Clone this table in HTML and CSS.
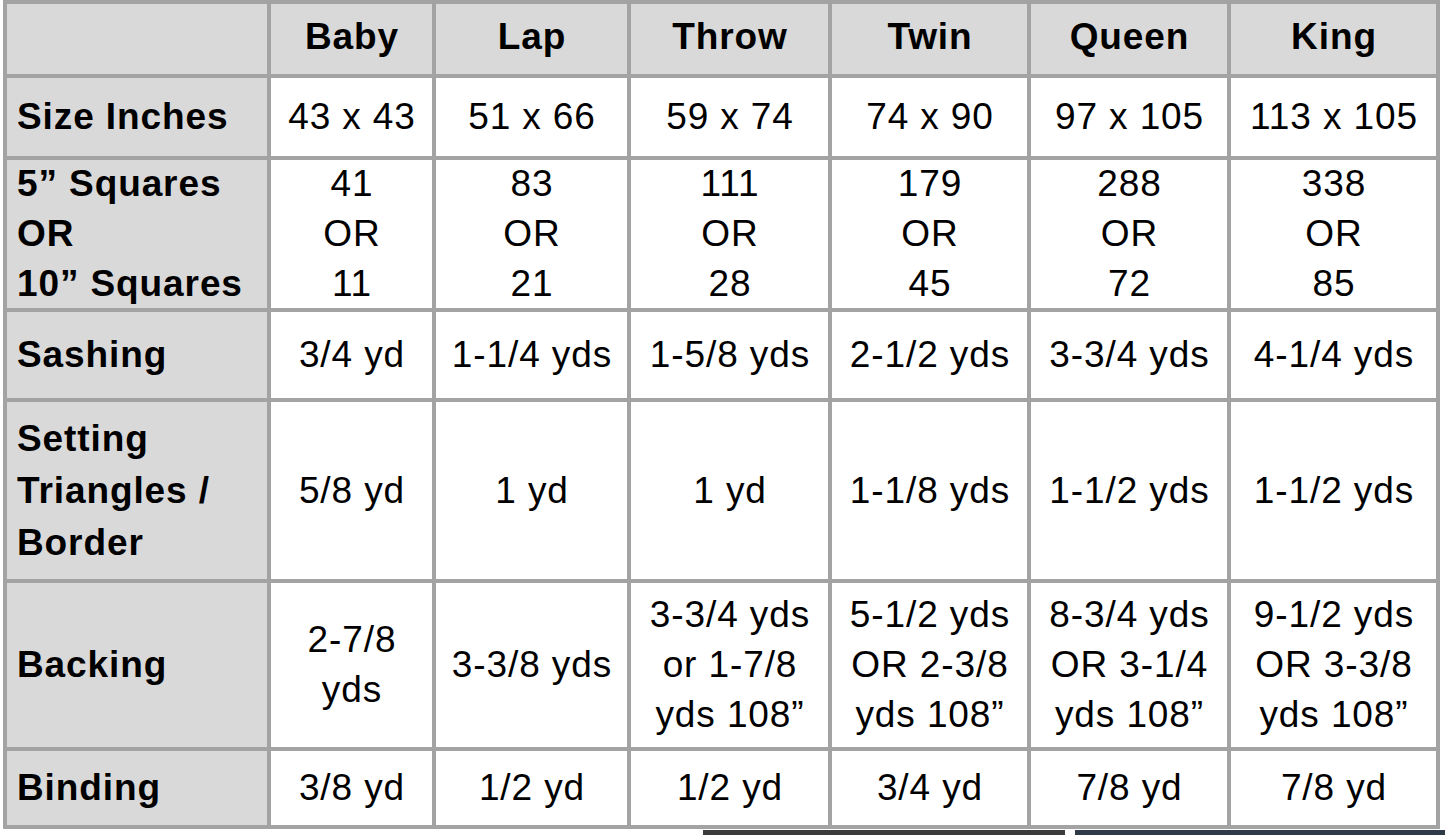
FILE: index.html
```html
<!DOCTYPE html>
<html lang="en">
<head>
<meta charset="utf-8">
<title>Quilt Size Chart</title>
<link rel="stylesheet" href="styles.css">
</head>
<body>
<div class="chart" role="table">
  <div class="cell head corner"></div>
  <div class="cell head">Baby</div>
  <div class="cell head">Lap</div>
  <div class="cell head">Throw</div>
  <div class="cell head">Twin</div>
  <div class="cell head">Queen</div>
  <div class="cell head">King</div>

  <div class="cell label">Size Inches</div>
  <div class="cell">43 x 43</div>
  <div class="cell">51 x 66</div>
  <div class="cell">59 x 74</div>
  <div class="cell">74 x 90</div>
  <div class="cell">97 x 105</div>
  <div class="cell">113 x 105</div>

  <div class="cell label">5” Squares<br>OR<br>10” Squares</div>
  <div class="cell">41<br>OR<br>11</div>
  <div class="cell">83<br>OR<br>21</div>
  <div class="cell">111<br>OR<br>28</div>
  <div class="cell">179<br>OR<br>45</div>
  <div class="cell">288<br>OR<br>72</div>
  <div class="cell">338<br>OR<br>85</div>

  <div class="cell label">Sashing</div>
  <div class="cell">3/4 yd</div>
  <div class="cell">1-1/4 yds</div>
  <div class="cell">1-5/8 yds</div>
  <div class="cell">2-1/2 yds</div>
  <div class="cell">3-3/4 yds</div>
  <div class="cell">4-1/4 yds</div>

  <div class="cell label tall">Setting<br>Triangles /<br>Border</div>
  <div class="cell">5/8 yd</div>
  <div class="cell">1 yd</div>
  <div class="cell">1 yd</div>
  <div class="cell">1-1/8 yds</div>
  <div class="cell">1-1/2 yds</div>
  <div class="cell">1-1/2 yds</div>

  <div class="cell label">Backing</div>
  <div class="cell">2-7/8<br>yds</div>
  <div class="cell">3-3/8 yds</div>
  <div class="cell">3-3/4 yds<br>or 1-7/8<br>yds 108”</div>
  <div class="cell">5-1/2 yds<br>OR 2-3/8<br>yds 108”</div>
  <div class="cell">8-3/4 yds<br>OR 3-1/4<br>yds 108”</div>
  <div class="cell">9-1/2 yds<br>OR 3-3/8<br>yds 108”</div>

  <div class="cell label">Binding</div>
  <div class="cell">3/8 yd</div>
  <div class="cell">1/2 yd</div>
  <div class="cell">1/2 yd</div>
  <div class="cell">3/4 yd</div>
  <div class="cell">7/8 yd</div>
  <div class="cell">7/8 yd</div>
</div>
<div class="below">
  <div class="bar bar-dark"></div>
  <div class="bar bar-navy"></div>
</div>
</body>
</html>
```

FILE: styles.css
```css
html, body {
  margin: 0;
  padding: 0;
  background: #ffffff;
}

body {
  padding-left: 3px;
  font-family: "Liberation Sans", Arial, sans-serif;
  color: #000000;
  overflow: hidden;
}

.chart {
  display: grid;
  width: 1437px;
  box-sizing: border-box;
  grid-template-columns: 260px 161px 191px 197px 195px 196px 205px;
  grid-template-rows: 70px 78px 148px 86px 177px 164px 74px;
  gap: 4px;
  padding: 4px;
  background: #a3a3a3;
}

.cell {
  background: #ffffff;
  display: flex;
  align-items: center;
  justify-content: center;
  text-align: center;
  font-size: 37px;
  letter-spacing: 0.9px;
  line-height: 50px;
  white-space: nowrap;
  padding-left: 1px;
}

.head {
  background: #d9d9d9;
  font-weight: bold;
  padding-bottom: 4px;
}

.label {
  background: #d9d9d9;
  font-weight: bold;
  justify-content: flex-start;
  text-align: left;
  padding-left: 10px;
}

.tall {
  line-height: 52px;
}

.below {
  display: flex;
  padding-left: 700px;
  gap: 10px;
  margin-top: 1px;
}

.bar {
  height: 6px;
}

.bar-dark {
  width: 362px;
  background: #3b3b3b;
}

.bar-navy {
  width: 370px;
  background: #2e3a48;
}
```
